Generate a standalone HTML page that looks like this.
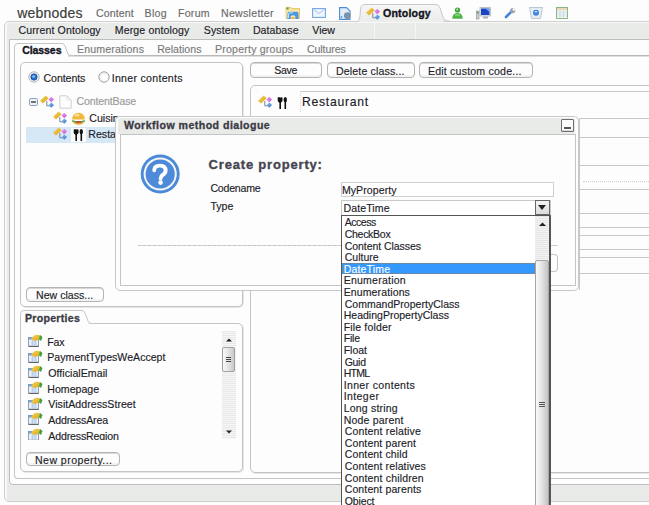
<!DOCTYPE html>
<html><head><meta charset="utf-8"><style>
html,body{margin:0;padding:0;}
body{width:649px;height:505px;overflow:hidden;position:relative;background:#fdfdfd;font-family:"Liberation Sans",sans-serif;}
.b{position:absolute;box-sizing:content-box;}
svg.b{overflow:visible}
.t{position:absolute;white-space:nowrap;line-height:normal;-webkit-text-stroke:0.15px currentColor;}
.btn{position:absolute;border:1px solid #b4b4b4;border-radius:4px;background:#fdfdfd;box-shadow:inset 0 1px 0 #d8d8d8, inset 0 -2px 0 #f2f2f2;}
</style></head><body>
<!-- outer frame -->
<div class="b" style="z-index:1;left:4px;top:21px;width:660px;height:479px;background:#e9ebe9;border:1px solid #cfcfcf;border-radius:5px;box-shadow:inset 2px 1px 0 #f7f8f7;"></div>
<!-- menu separators -->
<div class="b" style="z-index:1;left:374px;top:22px;width:1px;height:17px;background:#f6f6f6"></div>
<div class="b" style="z-index:1;left:415px;top:22px;width:1px;height:17px;background:#f6f6f6"></div>
<!-- white panel -->
<div class="b" style="z-index:1;left:9px;top:39px;width:660px;height:444px;background:#fdfdfd;border:1px solid #bdbdbd;border-radius:0 0 0 4px;"></div>
<!-- tab content panel -->
<div class="b" style="z-index:1;left:14px;top:55px;width:660px;height:422px;background:#fdfdfd;border:1px solid #c4c4c4;border-top-color:#b8b8b8;box-shadow:inset 0 1px 0 #dedede;border-radius:0 0 0 4px;"></div>
<!-- classes tab -->
<svg class="b" style="z-index:1;left:14px;top:43px" width="60" height="14"><path d="M0.5 13 V4 Q0.5 0.5 4 0.5 H48 Q50 0.5 51 3 L54 11 Q55 12.5 58 12.5 H60" fill="#fdfdfd" stroke="#c4c4c4" stroke-width="1"/><rect x="1" y="12" width="53" height="2" fill="#fdfdfd"/></svg>
<!-- contents panel -->
<div class="b" style="z-index:1;left:20px;top:62px;width:221px;height:243px;background:#fdfdfd;border:1px solid #c4c4c4;border-radius:5px;box-shadow:1px 1px 0 #e6e6e6;"></div>
<!-- properties panel -->
<div class="b" style="z-index:1;left:20px;top:323px;width:221px;height:147px;background:#fdfdfd;border:1px solid #c4c4c4;border-radius:0 5px 5px 5px;box-shadow:1px 1px 0 #e6e6e6;"></div>
<svg class="b" style="z-index:1;left:20px;top:310px" width="75" height="15"><path d="M0.5 14 V4 Q0.5 0.5 4 0.5 H62 Q64 0.5 65 3 L68 11 Q69 13.5 72 13.5 H75" fill="#fdfdfd" stroke="#c8c8c8" stroke-width="1"/><rect x="1" y="13" width="67" height="3" fill="#fdfdfd"/></svg>
<!-- restaurant panel -->
<div class="b" style="z-index:1;left:250px;top:85px;width:420px;height:386px;background:#fdfdfd;border:1px solid #c4c4c4;border-radius:5px;box-shadow:1px 1px 0 #e6e6e6;"></div>
<div class="b" style="z-index:1;left:300px;top:91px;width:370px;height:20px;border-top:1px solid #c8c8c8;border-left:1px dotted #d8d8d8;"></div>
<!-- right grid -->
<div class="b" style="z-index:1;left:579px;top:118px;width:1px;height:172px;background:#c8c8c8"></div>
<div class="b" style="z-index:1;left:579px;top:118px;width:80px;height:1px;background:#c8c8c8"></div>
<div class="b" style="z-index:1;left:579px;top:137px;width:80px;height:1px;background:#c8c8c8"></div>
<div class="b" style="z-index:1;left:579px;top:165px;width:80px;height:1px;background:#c8c8c8"></div>
<div class="b" style="z-index:1;left:583px;top:181px;width:80px;height:0;border-top:1px dotted #cfcfcf"></div>
<div class="b" style="z-index:1;left:579px;top:189px;width:80px;height:1px;background:#c8c8c8"></div>
<div class="b" style="z-index:1;left:579px;top:213px;width:80px;height:1px;background:#c8c8c8"></div>
<div class="b" style="z-index:1;left:579px;top:227px;width:80px;height:1px;background:#c8c8c8"></div>
<div class="b" style="z-index:1;left:579px;top:235px;width:80px;height:1px;background:#c8c8c8"></div>
<div class="b" style="z-index:1;left:579px;top:249px;width:80px;height:1px;background:#c8c8c8"></div>
<div class="b" style="z-index:1;left:579px;top:257px;width:80px;height:1px;background:#c8c8c8"></div>
<div class="b" style="z-index:1;left:579px;top:273px;width:80px;height:1px;background:#c8c8c8"></div>
<!-- buttons -->
<div class="btn" style="z-index:1;left:250px;top:62px;width:70px;height:14px;"></div>
<div class="btn" style="z-index:1;left:327px;top:62px;width:86px;height:14px;"></div>
<div class="btn" style="z-index:1;left:419px;top:62px;width:112px;height:14px;"></div>
<div class="btn" style="z-index:1;left:26px;top:287px;width:76px;height:13px;"></div>
<div class="btn" style="z-index:1;left:26px;top:452px;width:92px;height:12px;"></div>
<!-- ontology tab -->
<svg class="b" style="z-index:1;left:350px;top:0px" width="100" height="23"><defs><linearGradient id="tabg" x1="0" y1="0" x2="0" y2="1"><stop offset="0" stop-color="#f6f7f6"/><stop offset="1" stop-color="#eaecea"/></linearGradient></defs><path d="M7.5 21.5 Q9.5 20 10 16 L10.5 9 Q11 4.5 15 4.5 H86 Q89 4.5 90 8 L93 17 Q94 20.5 98 21 H100" fill="url(#tabg)" stroke="#c9c9c9" stroke-width="1"/></svg>
<div class="b" style="z-index:1;left:359px;top:20px;width:84px;height:2px;background:#eceeec"></div>
<!-- tree highlight -->
<div class="b" style="z-index:1;left:26px;top:127px;width:216px;height:16px;background:#d6e7f6"></div>
<!-- props scrollbar -->
<div class="b" style="z-index:1;left:222px;top:331px;width:14px;height:108px;background:repeating-linear-gradient(0deg,#f6f6f6 0 1px,#e9e9e9 1px 2px);"></div>
<svg class="b" style="z-index:2;left:226px;top:338px" width="6" height="4"><path d="M0 3.5 L3 0.5 L6 3.5 Z" fill="#222"/></svg>
<svg class="b" style="z-index:2;left:226px;top:429.5px" width="6" height="4"><path d="M0 0.5 L3 3.5 L6 0.5 Z" fill="#222"/></svg>
<div class="b" style="z-index:2;left:222px;top:347px;width:13px;height:25px;background:linear-gradient(90deg,#f7f7f7,#e6e6e6 45%,#c8c8c8);border:1px solid #a0a0a0;box-sizing:border-box;border-radius:2px"></div>
<div class="b" style="z-index:3;left:226px;top:357px;width:5px;height:1px;background:#444;box-shadow:0 2px 0 #444,0 4px 0 #444"></div>
<div class="b" style="z-index:3;left:26px;top:440px;width:195px;height:10px;background:#fdfdfd"></div>
<!-- dialog -->
<div class="b" style="z-index:10;left:115px;top:116px;width:462px;height:173px;background:#fdfdfd;border:1px solid #c8c8c8;border-radius:5px;"></div>
<div class="b" style="z-index:10;left:118px;top:118px;width:457px;height:16px;background:#e9ebe9;border-radius:3px 3px 0 0"></div>
<div class="b" style="z-index:10;left:120px;top:134px;width:454px;height:150px;background:#fdfdfd;border:1px solid #c4c4c4;"></div>
<div class="b" style="z-index:10;left:561px;top:119px;width:11px;height:11px;border:1px solid #6e6e6e;background:#fbfbfb;border-radius:1px;box-shadow:inset 0 -1px 0 #dcdcdc"></div>
<div class="b" style="z-index:10;left:564px;top:127px;width:7px;height:1.5px;background:#555"></div>
<div class="b" style="z-index:10;left:138px;top:245px;width:420px;height:1px;background:repeating-linear-gradient(90deg,#c6c6c6 0 3px,#d6d6d6 3px 5px)"></div>
<div class="b" style="z-index:10;left:551px;top:254px;width:6px;height:16px;border:1px solid #c4c4c4;border-left:none;border-radius:0 4px 4px 0"></div>
<!-- question icon -->
<svg class="b" style="z-index:10;left:140px;top:153.5px" width="40" height="40" viewBox="0 0 40 40"><circle cx="20.2" cy="20" r="19.5" fill="#4b89d9"/><circle cx="20.2" cy="20" r="16.6" fill="#f4f6f8"/><circle cx="20.2" cy="20" r="14.6" fill="#4d8bd9"/><path d="M14.2 16.2 Q14.2 11.6 20 11.6 Q25.6 11.6 25.6 16.4 Q25.6 19.3 22.6 21 Q20.6 22.3 20.6 24.6" fill="none" stroke="#fff" stroke-width="3.9" stroke-linecap="round"/><circle cx="20.6" cy="28.6" r="2.3" fill="#fff"/></svg>
<!-- inputs -->
<div class="b" style="z-index:10;left:341px;top:182px;width:211px;height:13px;border:1px solid #d0d0d0;background:#fff"></div>
<div class="b" style="z-index:10;left:341px;top:200px;width:208px;height:14px;border:1px solid #c8c8c8;background:#fff"></div>
<div class="b" style="z-index:10;left:535px;top:200px;width:15px;height:15px;background:linear-gradient(#f4f4f4,#dcdcdc);border:1px solid #666;box-sizing:border-box"></div>
<svg class="b" style="z-index:10;left:538px;top:205px" width="8" height="5"><path d="M0 0 H8 L4 5 Z" fill="#222"/></svg>
<!-- dropdown list -->
<div class="b" style="z-index:20;left:341px;top:215px;width:208px;height:300px;background:#fff;border-left:1px solid #555;border-top:1px solid #555;border-right:1px solid #555"></div>
<div class="b" style="z-index:20;left:342px;top:263px;width:193px;height:11px;background:#3399ff;border:1px dotted #a07a50;box-sizing:border-box"></div>
<div class="b" style="z-index:20;left:535px;top:216px;width:14px;height:300px;background:repeating-linear-gradient(0deg,#f3f3f3 0 1px,#e6e6e6 1px 2px)"></div>
<div class="b" style="z-index:20;left:549px;top:215px;width:1px;height:300px;background:#555"></div>
<svg class="b" style="z-index:21;left:539px;top:222px" width="7" height="4"><path d="M0 4 L3.5 0.5 L7 4 Z" fill="#222"/></svg>
<div class="b" style="z-index:21;left:535px;top:260px;width:14px;height:290px;background:linear-gradient(90deg,#f8f8f8,#e8e8e8 40%,#c4c4c4);border:1px solid #a6a6a6;box-sizing:border-box;border-radius:2px"></div>
<div class="b" style="z-index:22;left:539px;top:402px;width:6px;height:1px;background:#555;box-shadow:0 2px 0 #555,0 4px 0 #555"></div>
<svg width="0" height="0" style="position:absolute">
<defs>
<linearGradient id="gy" x1="0" y1="0" x2="1" y2="1"><stop offset="0" stop-color="#f7d65a"/><stop offset="1" stop-color="#d9a21a"/></linearGradient>
<linearGradient id="gp" x1="0" y1="0" x2="1" y2="1"><stop offset="0" stop-color="#f29ef5"/><stop offset="1" stop-color="#c44fd0"/></linearGradient>
<linearGradient id="gb" x1="0" y1="0" x2="1" y2="1"><stop offset="0" stop-color="#8ec2f4"/><stop offset="1" stop-color="#2f74d0"/></linearGradient>
<symbol id="onto" viewBox="0 0 14 14">
  <path d="M6.8 6 V10.8 H9.8" fill="none" stroke="#7a869c" stroke-width="1"/>
  <path d="M5.6 0.4 L8.6 3.2 L3 8.6 L0 5.8 Z" fill="url(#gy)"/>
  <path d="M11.2 1.8 L14 4.4 L11.2 7.2 L8.4 4.6 Z" fill="url(#gp)"/>
  <path d="M11.3 7.4 L14 10 L11.3 12.8 L8.6 10.2 Z" fill="url(#gb)"/>
</symbol>
<symbol id="prop" viewBox="0 0 15 13">
  <rect x="0.5" y="3.5" width="10" height="9" fill="#e8f1fb" stroke="#7a8aa0" stroke-width="0.8"/>
  <rect x="0.5" y="3.5" width="10" height="2" fill="#6aa3e6"/>
  <path d="M1 12.3 H10.5" stroke="#555" stroke-width="1"/>
  <path d="M3 8 H9 M3 10 H9 M4.5 6 V12 M7 6 V12" stroke="#a8c4e6" stroke-width="0.7"/>
  <path d="M2.5 5.5 L6 1.5 Q9 0 12 1.5 L13.5 3 L10 6 L7 7 Z" fill="url(#gy)"/>
  <path d="M12 1 L14.5 3 L13 7 L11 5.5 Z" fill="#3ea23a"/>
</symbol>
</defs>
</svg>
<!-- header icons -->
<svg class="b" style="z-index:1;left:285px;top:6px" width="16" height="14" viewBox="0 0 16 14">
  <path d="M1 1.5 H6 L7 2.5 H14.5 V12.5 H1 Z" fill="#f7e09a" stroke="#e3bf5c" stroke-width="0.8"/>
  <path d="M1.5 4 H14 V12 H1.5 Z" fill="#f9e7a8"/>
  <rect x="1.5" y="1.5" width="2" height="2" fill="#5aa03a"/>
  <path d="M2.5 13 V7.5 Q2.5 5.8 4.2 5.8 H11.8 Q13.5 5.8 13.5 7.5 V13 H10.3 V10 Q8 8.6 5.7 10 V13 Z" fill="#4a97e4"/>
  <path d="M3.5 12 V8 Q3.8 6.8 5 6.8 H8" stroke="#d2ebff" stroke-width="0.9" fill="none"/>
  <ellipse cx="8" cy="12" rx="1.6" ry="1" fill="#f0b030"/>
</svg>
<svg class="b" style="z-index:1;left:312px;top:8px" width="14" height="10" viewBox="0 0 14 10">
  <rect x="0.6" y="0.6" width="12.8" height="8.8" fill="#eef4fc" stroke="#6a9ee0" stroke-width="1"/>
  <path d="M1 1 L7 5.5 L13 1" fill="none" stroke="#9cc0ec" stroke-width="0.9"/>
</svg>
<svg class="b" style="z-index:1;left:339px;top:7px" width="13" height="13" viewBox="0 0 13 13">
  <path d="M0.6 0.6 H7.5 L11 4 V12.4 H0.6 Z" fill="#e3eefb" stroke="#4f8ad8" stroke-width="1.1"/>
  <circle cx="8.3" cy="8.6" r="3.4" fill="#8a8f96"/>
  <circle cx="8.3" cy="8.6" r="1.4" fill="#4aa0f0"/>
  <circle cx="2.5" cy="10" r="0.9" fill="#4aa0f0"/>
</svg>
<svg class="b" style="z-index:2;left:366px;top:7px" width="14" height="14"><use href="#onto"/></svg>
<svg class="b" style="z-index:1;left:452px;top:7px" width="11" height="12" viewBox="0 0 11 12">
  <circle cx="5.5" cy="3" r="2.6" fill="#3aa238"/>
  <circle cx="5.2" cy="2.6" r="1" fill="#c5f0b8"/>
  <path d="M0.3 11.7 Q0.3 6 5.5 6 Q10.7 6 10.7 11.7 Z" fill="#4cb548"/>
  <path d="M3 8 H8" stroke="#a7e29a" stroke-width="1"/>
</svg>
<svg class="b" style="z-index:1;left:476px;top:7px" width="15" height="12" viewBox="0 0 15 12">
  <rect x="0.5" y="4" width="2.5" height="8" fill="#cfd3d6" stroke="#777" stroke-width="0.5"/>
  <rect x="1" y="5" width="1.5" height="1.5" fill="#4a9a30"/>
  <rect x="4" y="0.5" width="10.5" height="8.5" fill="#e8ebee" stroke="#9aa1a8" stroke-width="0.6"/>
  <rect x="5" y="1.5" width="8.5" height="6.5" fill="#1a45c2"/>
  <path d="M9.5 1.5 H13.5 V5 Z" fill="#7fb0ea"/>
  <rect x="7" y="9.5" width="5" height="2" fill="#aab0b6"/>
</svg>
<svg class="b" style="z-index:1;left:505px;top:8px" width="11" height="10" viewBox="0 0 11 10">
  <path d="M1 9 L6 4" stroke="#3d85dc" stroke-width="2.6" stroke-linecap="round"/>
  <circle cx="7.7" cy="2.6" r="2.6" fill="#9ba3aa"/>
  <circle cx="8.8" cy="1.5" r="1.2" fill="#fdfdfd"/>
</svg>
<svg class="b" style="z-index:1;left:529px;top:7px" width="14" height="12" viewBox="0 0 14 12">
  <path d="M0.5 0.5 H13.5 L11.5 11.5 H2.5 Z" fill="#e6edf4" stroke="#a9b6c4" stroke-width="0.7"/>
  <circle cx="7" cy="5.8" r="3" fill="#3e84db"/>
  <path d="M6 5.5 L7 4 L8 5.5" stroke="#fff" stroke-width="0.9" fill="none"/>
</svg>
<svg class="b" style="z-index:1;left:556px;top:7px" width="12" height="12" viewBox="0 0 12 12">
  <rect x="0.5" y="0.5" width="11" height="11" fill="#f6f9f4" stroke="#7fb07a" stroke-width="0.9"/>
  <rect x="1" y="1" width="10" height="2.2" fill="#ead8b8"/>
  <path d="M1 5 H11 M1 7 H11 M1 9 H11 M4 3 V11 M7.5 3 V11" stroke="#b9d0e4" stroke-width="0.6"/>
</svg>
<!-- radios -->
<svg class="b" style="z-index:1;left:28px;top:71px" width="12" height="12" viewBox="0 0 12 12">
  <circle cx="6" cy="6" r="5.2" fill="#f8f8f8" stroke="#a9a9a9" stroke-width="0.9"/>
  <circle cx="6" cy="6" r="3.2" fill="#2a6fd0" stroke="#1b3f86" stroke-width="0.7"/>
  <circle cx="5.6" cy="5.5" r="1.3" fill="#8cc6ff"/>
</svg>
<svg class="b" style="z-index:1;left:98px;top:71px" width="12" height="12" viewBox="0 0 12 12">
  <circle cx="6" cy="6" r="5.2" fill="#f2f2f2" stroke="#9a9a9a" stroke-width="0.9"/>
  <circle cx="6.6" cy="6.6" r="3.4" fill="#fdfdfd"/>
</svg>
<!-- tree icons -->
<svg class="b" style="z-index:1;left:29px;top:98px" width="9" height="8" viewBox="0 0 9 8">
  <rect x="0.5" y="0.5" width="8" height="7" rx="1" fill="#eef2f7" stroke="#7f97b8" stroke-width="0.9"/>
  <path d="M2 4 H7" stroke="#222" stroke-width="1.2"/>
</svg>
<svg class="b" style="z-index:1;left:40px;top:95px" width="14" height="14"><use href="#onto"/></svg>
<svg class="b" style="z-index:1;left:59px;top:95px" width="13" height="14" viewBox="0 0 13 14">
  <path d="M0.8 0.8 H8 L12.2 5 V13.2 H0.8 Z" fill="#fdfdfd" stroke="#cfcfcf" stroke-width="1"/>
  <path d="M8 1 V5 H12" fill="none" stroke="#d8d8d8" stroke-width="0.8"/>
</svg>
<svg class="b" style="z-index:1;left:53px;top:111px" width="14" height="14"><use href="#onto"/></svg>
<svg class="b" style="z-index:1;left:71px;top:112px" width="15" height="13" viewBox="0 0 15 13">
  <path d="M1 8 Q7.5 10.5 14 8 L13.5 10 Q7.5 13.5 1.5 10 Z" fill="#49a83a"/>
  <path d="M2 9.5 Q7.5 12 13 9.5 Q12 12.8 7.5 12.8 Q3 12.8 2 9.5 Z" fill="#e5a83a"/>
  <path d="M5 10 H10" stroke="#d93a2a" stroke-width="1.6"/>
  <path d="M1.2 7.5 Q1.5 0.8 7.5 0.8 Q13.5 0.8 13.8 7.5 Z" fill="#f0b93c"/>
  <ellipse cx="6" cy="3.2" rx="2.5" ry="1.3" fill="#f9e09a"/>
</svg>
<svg class="b" style="z-index:1;left:53px;top:127px" width="14" height="14"><use href="#onto"/></svg>
<svg class="b" style="z-index:1;left:71px;top:128px" width="15" height="14" viewBox="0 0 15 14">
  <rect x="0" y="0" width="15" height="14" fill="#fdfdfd"/>
  <path d="M4.3 1.5 V4.5 Q4.3 6 5.2 6.3 V13" stroke="#111" stroke-width="1.6" fill="none"/>
  <path d="M3.2 1.5 V5 Q3.5 6.2 5.2 6.2 Q6.8 6.2 7 5 V1.5" stroke="#111" stroke-width="1" fill="#111"/>
  <ellipse cx="10.3" cy="3.7" rx="1.7" ry="2.6" fill="#111"/>
  <path d="M10.3 5 V13" stroke="#111" stroke-width="1.6"/>
</svg>
<!-- restaurant header icons -->
<svg class="b" style="z-index:1;left:258px;top:95px" width="14" height="14"><use href="#onto"/></svg>
<svg class="b" style="z-index:1;left:275px;top:96px" width="15" height="14" viewBox="0 0 15 14">
  <path d="M4.3 1.5 V4.5 Q4.3 6 5.2 6.3 V13" stroke="#111" stroke-width="1.6" fill="none"/>
  <path d="M3.2 1.5 V5 Q3.5 6.2 5.2 6.2 Q6.8 6.2 7 5 V1.5" stroke="#111" stroke-width="1" fill="#111"/>
  <ellipse cx="10.3" cy="3.7" rx="1.7" ry="2.6" fill="#111"/>
  <path d="M10.3 5 V13" stroke="#111" stroke-width="1.6"/>
</svg>
<svg class="b" style="z-index:1;left:28px;top:334.0px" width="15" height="13"><use href="#prop"/></svg>
<svg class="b" style="z-index:1;left:28px;top:349.7px" width="15" height="13"><use href="#prop"/></svg>
<svg class="b" style="z-index:1;left:28px;top:365.4px" width="15" height="13"><use href="#prop"/></svg>
<svg class="b" style="z-index:1;left:28px;top:381.0px" width="15" height="13"><use href="#prop"/></svg>
<svg class="b" style="z-index:1;left:28px;top:396.7px" width="15" height="13"><use href="#prop"/></svg>
<svg class="b" style="z-index:1;left:28px;top:412.4px" width="15" height="13"><use href="#prop"/></svg>
<svg class="b" style="z-index:1;left:28px;top:428.1px" width="15" height="13"><use href="#prop"/></svg>

<div class="t" style="left:17.20px;top:4.73px;font-size:14.00px;font-weight:normal;color:#404040;letter-spacing:0.229px;-webkit-text-stroke:0.2px #404040;z-index:2;">webnodes</div>
<div class="t" style="left:96.00px;top:7.41px;font-size:10.60px;font-weight:normal;color:#6a6a6a;letter-spacing:0.083px;z-index:2;">Content</div>
<div class="t" style="left:144.50px;top:7.41px;font-size:10.60px;font-weight:normal;color:#6a6a6a;letter-spacing:0.333px;z-index:2;">Blog</div>
<div class="t" style="left:178.00px;top:7.41px;font-size:10.60px;font-weight:normal;color:#6a6a6a;letter-spacing:0.250px;z-index:2;">Forum</div>
<div class="t" style="left:221.00px;top:7.41px;font-size:10.60px;font-weight:normal;color:#6a6a6a;letter-spacing:0.278px;z-index:2;">Newsletter</div>
<div class="t" style="left:383.10px;top:7.41px;font-size:10.60px;font-weight:bold;color:#15151f;letter-spacing:0.157px;-webkit-text-stroke:0.35px #15151f;z-index:2;">Ontology</div>
<div class="t" style="left:18.50px;top:23.81px;font-size:10.60px;font-weight:normal;color:#1c1c28;letter-spacing:0.100px;z-index:2;">Current Ontology</div>
<div class="t" style="left:114.70px;top:23.81px;font-size:10.60px;font-weight:normal;color:#1c1c28;letter-spacing:0.131px;z-index:2;">Merge ontology</div>
<div class="t" style="left:203.80px;top:23.81px;font-size:10.60px;font-weight:normal;color:#1c1c28;letter-spacing:0.100px;z-index:2;">System</div>
<div class="t" style="left:252.90px;top:23.81px;font-size:10.60px;font-weight:normal;color:#1c1c28;letter-spacing:0.043px;z-index:2;">Database</div>
<div class="t" style="left:312.30px;top:23.81px;font-size:10.60px;font-weight:normal;color:#1c1c28;letter-spacing:-0.033px;z-index:2;">View</div>
<div class="t" style="left:22.20px;top:43.71px;font-size:10.60px;font-weight:bold;color:#15151f;letter-spacing:-0.117px;-webkit-text-stroke:0.35px #15151f;z-index:2;">Classes</div>
<div class="t" style="left:77.00px;top:43.41px;font-size:10.60px;font-weight:normal;color:#7a7a7a;letter-spacing:0.145px;z-index:2;">Enumerations</div>
<div class="t" style="left:157.20px;top:43.41px;font-size:10.60px;font-weight:normal;color:#7a7a7a;letter-spacing:0.013px;z-index:2;">Relations</div>
<div class="t" style="left:215.00px;top:43.41px;font-size:10.60px;font-weight:normal;color:#7a7a7a;letter-spacing:0.200px;z-index:2;">Property groups</div>
<div class="t" style="left:307.00px;top:43.41px;font-size:10.60px;font-weight:normal;color:#7a7a7a;letter-spacing:-0.100px;z-index:2;">Cultures</div>
<div class="t" style="left:43.50px;top:72.01px;font-size:10.60px;font-weight:normal;color:#1c1c28;letter-spacing:-0.071px;z-index:2;">Contents</div>
<div class="t" style="left:111.70px;top:72.01px;font-size:10.60px;font-weight:normal;color:#1c1c28;letter-spacing:0.285px;z-index:2;">Inner contents</div>
<div class="t" style="left:76.40px;top:94.81px;font-size:10.60px;font-weight:normal;color:#9a9a9a;letter-spacing:-0.140px;z-index:2;">ContentBase</div>
<div class="t" style="left:89.30px;top:111.51px;font-size:10.60px;font-weight:normal;color:#1c1c28;letter-spacing:0.000px;z-index:2;">Cuisine</div>
<div class="t" style="left:88.30px;top:127.71px;font-size:10.60px;font-weight:normal;color:#1c1c28;letter-spacing:0.000px;z-index:2;">Restaurant</div>
<div class="t" style="left:36.00px;top:288.71px;font-size:10.60px;font-weight:normal;color:#1c1c28;letter-spacing:0.000px;z-index:2;">New class...</div>
<div class="t" style="left:24.90px;top:312.41px;font-size:10.60px;font-weight:bold;color:#3a3a44;letter-spacing:0.289px;-webkit-text-stroke:0.3px #3a3a44;z-index:2;">Properties</div>
<div class="t" style="left:47.30px;top:335.71px;font-size:10.60px;font-weight:normal;color:#1c1c28;letter-spacing:-0.250px;z-index:2;">Fax</div>
<div class="t" style="left:47.30px;top:351.39px;font-size:10.60px;font-weight:normal;color:#1c1c28;letter-spacing:0.000px;z-index:2;">PaymentTypesWeAccept</div>
<div class="t" style="left:48.30px;top:367.07px;font-size:10.60px;font-weight:normal;color:#1c1c28;letter-spacing:0.033px;z-index:2;">OfficialEmail</div>
<div class="t" style="left:47.30px;top:382.75px;font-size:10.60px;font-weight:normal;color:#1c1c28;letter-spacing:0.000px;z-index:2;">Homepage</div>
<div class="t" style="left:48.30px;top:398.43px;font-size:10.60px;font-weight:normal;color:#1c1c28;letter-spacing:0.029px;z-index:2;">VisitAddressStreet</div>
<div class="t" style="left:48.30px;top:414.11px;font-size:10.60px;font-weight:normal;color:#1c1c28;letter-spacing:-0.140px;z-index:2;">AddressArea</div>
<div class="t" style="left:48.30px;top:429.79px;font-size:10.60px;font-weight:normal;color:#1c1c28;letter-spacing:-0.150px;z-index:2;">AddressRegion</div>
<div class="t" style="left:35.00px;top:453.51px;font-size:10.60px;font-weight:normal;color:#1c1c28;letter-spacing:0.429px;z-index:2;">New property...</div>
<div class="t" style="left:274.20px;top:64.31px;font-size:10.60px;font-weight:normal;color:#1c1c28;letter-spacing:-0.300px;z-index:2;">Save</div>
<div class="t" style="left:336.00px;top:64.51px;font-size:10.60px;font-weight:normal;color:#1c1c28;letter-spacing:0.136px;z-index:2;">Delete class...</div>
<div class="t" style="left:427.90px;top:64.51px;font-size:10.60px;font-weight:normal;color:#1c1c28;letter-spacing:0.194px;z-index:2;">Edit custom code...</div>
<div class="t" style="left:301.90px;top:95.16px;font-size:12.20px;font-weight:normal;color:#1c1c28;letter-spacing:0.733px;z-index:2;">Restaurant</div>
<div class="t" style="left:123.90px;top:119.21px;font-size:10.60px;font-weight:bold;color:#3a3a44;letter-spacing:0.465px;-webkit-text-stroke:0.3px #3a3a44;z-index:12;">Workflow method dialogue</div>
<div class="t" style="left:208.60px;top:156.84px;font-size:13.00px;font-weight:bold;color:#444450;letter-spacing:0.813px;-webkit-text-stroke:0.35px #444450;z-index:12;">Create property:</div>
<div class="t" style="left:210.40px;top:182.31px;font-size:10.60px;font-weight:normal;color:#1c1c28;letter-spacing:-0.229px;z-index:12;">Codename</div>
<div class="t" style="left:210.40px;top:200.01px;font-size:10.60px;font-weight:normal;color:#1c1c28;letter-spacing:0.000px;z-index:12;">Type</div>
<div class="t" style="left:341.90px;top:184.41px;font-size:10.60px;font-weight:normal;color:#1c1c28;letter-spacing:0.056px;z-index:12;">MyProperty</div>
<div class="t" style="left:343.50px;top:202.31px;font-size:10.60px;font-weight:normal;color:#1c1c28;letter-spacing:0.071px;z-index:12;">DateTime</div>
<div class="t" style="left:344.70px;top:216.40px;font-size:10.50px;font-weight:normal;color:#1c1c28;letter-spacing:-0.440px;z-index:22;">Access</div>
<div class="t" style="left:344.70px;top:228.00px;font-size:10.50px;font-weight:normal;color:#1c1c28;letter-spacing:-0.271px;z-index:22;">CheckBox</div>
<div class="t" style="left:344.70px;top:239.60px;font-size:10.50px;font-weight:normal;color:#1c1c28;letter-spacing:-0.057px;z-index:22;">Content Classes</div>
<div class="t" style="left:344.70px;top:251.20px;font-size:10.50px;font-weight:normal;color:#1c1c28;letter-spacing:0.017px;z-index:22;">Culture</div>
<div class="t" style="left:343.70px;top:262.80px;font-size:10.50px;font-weight:normal;color:#ffffff;letter-spacing:0.171px;z-index:22;">DateTime</div>
<div class="t" style="left:343.70px;top:274.40px;font-size:10.50px;font-weight:normal;color:#1c1c28;letter-spacing:0.240px;z-index:22;">Enumeration</div>
<div class="t" style="left:343.70px;top:286.00px;font-size:10.50px;font-weight:normal;color:#1c1c28;letter-spacing:0.127px;z-index:22;">Enumerations</div>
<div class="t" style="left:344.70px;top:297.60px;font-size:10.50px;font-weight:normal;color:#1c1c28;letter-spacing:0.026px;z-index:22;">CommandPropertyClass</div>
<div class="t" style="left:343.70px;top:309.20px;font-size:10.50px;font-weight:normal;color:#1c1c28;letter-spacing:0.011px;z-index:22;">HeadingPropertyClass</div>
<div class="t" style="left:343.70px;top:320.80px;font-size:10.50px;font-weight:normal;color:#1c1c28;letter-spacing:0.160px;z-index:22;">File folder</div>
<div class="t" style="left:343.70px;top:332.40px;font-size:10.50px;font-weight:normal;color:#1c1c28;letter-spacing:-0.167px;z-index:22;">File</div>
<div class="t" style="left:343.70px;top:344.00px;font-size:10.50px;font-weight:normal;color:#1c1c28;letter-spacing:0.000px;z-index:22;">Float</div>
<div class="t" style="left:344.70px;top:355.60px;font-size:10.50px;font-weight:normal;color:#1c1c28;letter-spacing:-0.300px;z-index:22;">Guid</div>
<div class="t" style="left:343.70px;top:367.20px;font-size:10.50px;font-weight:normal;color:#1c1c28;letter-spacing:-0.733px;z-index:22;">HTML</div>
<div class="t" style="left:343.70px;top:378.80px;font-size:10.50px;font-weight:normal;color:#1c1c28;letter-spacing:0.354px;z-index:22;">Inner contents</div>
<div class="t" style="left:343.70px;top:390.40px;font-size:10.50px;font-weight:normal;color:#1c1c28;letter-spacing:0.417px;z-index:22;">Integer</div>
<div class="t" style="left:343.70px;top:402.00px;font-size:10.50px;font-weight:normal;color:#1c1c28;letter-spacing:0.200px;z-index:22;">Long string</div>
<div class="t" style="left:343.70px;top:413.60px;font-size:10.50px;font-weight:normal;color:#1c1c28;letter-spacing:0.200px;z-index:22;">Node parent</div>
<div class="t" style="left:344.70px;top:425.20px;font-size:10.50px;font-weight:normal;color:#1c1c28;letter-spacing:0.173px;z-index:22;">Content relative</div>
<div class="t" style="left:344.70px;top:436.80px;font-size:10.50px;font-weight:normal;color:#1c1c28;letter-spacing:0.138px;z-index:22;">Content parent</div>
<div class="t" style="left:344.70px;top:448.40px;font-size:10.50px;font-weight:normal;color:#1c1c28;letter-spacing:0.133px;z-index:22;">Content child</div>
<div class="t" style="left:344.70px;top:460.00px;font-size:10.50px;font-weight:normal;color:#1c1c28;letter-spacing:0.144px;z-index:22;">Content relatives</div>
<div class="t" style="left:344.70px;top:471.60px;font-size:10.50px;font-weight:normal;color:#1c1c28;letter-spacing:0.167px;z-index:22;">Content children</div>
<div class="t" style="left:344.70px;top:483.20px;font-size:10.50px;font-weight:normal;color:#1c1c28;letter-spacing:0.129px;z-index:22;">Content parents</div>
<div class="t" style="left:344.70px;top:494.80px;font-size:10.50px;font-weight:normal;color:#1c1c28;letter-spacing:-0.100px;z-index:22;">Object</div>
</body></html>
